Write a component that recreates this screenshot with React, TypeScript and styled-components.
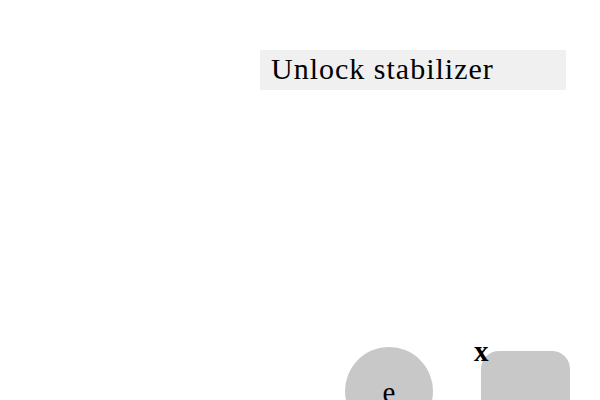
import * as React from "react";
import styled, { createGlobalStyle } from "styled-components";

const GlobalStyle = createGlobalStyle`
  html, body {
    margin: 0;
    padding: 0;
    background: #ffffff;
  }
  body {
    width: 600px;
    height: 400px;
    overflow: hidden;
    font-family: "Liberation Serif", "Times New Roman", serif;
    color: #000000;
  }
`;

const Page = styled.div`
  width: 600px;
  height: 400px;
  overflow: hidden;
  display: flex;
  flex-direction: column;
`;

const Header = styled.div`
  display: flex;
  justify-content: flex-end;
  padding: 50px 34px 0 0;
`;

const Banner = styled.div`
  width: 295px;
  height: 40px;
  padding-left: 11px;
  background: #f0f0f0;
  font-size: 30px;
  line-height: 38px;
  letter-spacing: 1px;
  white-space: nowrap;
`;

const Footer = styled.div`
  margin-top: auto;
  display: flex;
  align-items: flex-start;
  padding: 0 30px 0 345px;
  height: 53px;
`;

const Circle = styled.div`
  width: 88px;
  height: 88px;
  border-radius: 50%;
  background: #c8c8c8;
  display: flex;
  justify-content: center;
  padding-top: 31px;
  box-sizing: border-box;
  font-size: 29px;
  line-height: 1;
  flex-shrink: 0;
`;

const Tile = styled.div`
  position: relative;
  margin: 4px 0 0 48px;
  width: 89px;
  height: 89px;
  border-radius: 18px;
  background: #c8c8c8;
  flex-shrink: 0;
`;

const Close = styled.span`
  position: absolute;
  left: -7px;
  top: -14px;
  font-size: 29px;
  line-height: 1;
  font-weight: bold;
`;

export default function App() {
  return (
    <Page>
      <GlobalStyle />
      <Header>
        <Banner>Unlock stabilizer</Banner>
      </Header>
      <Footer>
        <Circle>e</Circle>
        <Tile>
          <Close>x</Close>
        </Tile>
      </Footer>
    </Page>
  );
}
